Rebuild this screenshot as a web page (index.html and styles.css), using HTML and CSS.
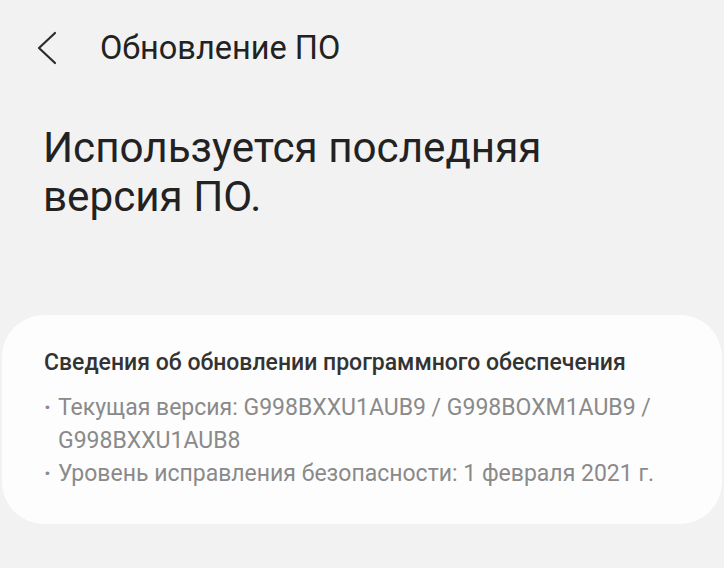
FILE: index.html
```html
<!DOCTYPE html>
<html lang="ru">
<head>
<meta charset="utf-8">
<link rel="stylesheet" href="styles.css">
</head>
<body>
<div class="page">
  <header class="header">
    <span class="back">
      <svg width="20" height="34" viewBox="0 0 20 34"><path d="M18 2 L2 17 L18 32" fill="none" stroke="#2b2b2b" stroke-width="2.2" stroke-linecap="round" stroke-linejoin="round"/></svg>
    </span>
    <h1 class="title">Обновление ПО</h1>
  </header>
  <h2 class="status">Используется последняя<br>версия ПО.</h2>
  <section class="card">
    <h3 class="card-title">Сведения об обновлении программного обеспечения</h3>
    <ul class="info">
      <li>Текущая версия: G998BXXU1AUB9 / G998BOXM1AUB9 / G998BXXU1AUB8</li>
      <li>Уровень исправления безопасности: 1 февраля 2021 г.</li>
    </ul>
  </section>
</div>
</body>
</html>
```
FILE: styles.css
```css
html, body {
  margin: 0;
  padding: 0;
  background: #f2f2f2;
}
.page {
  width: 724px;
  height: 568px;
  overflow: hidden;
  font-family: Roboto, "Noto Sans", sans-serif;
  display: flex;
  flex-direction: column;
}
.header {
  display: flex;
  align-items: center;
  height: 96px;
  padding-left: 37px;
}
.back {
  display: flex;
  width: 63px;
}
.title {
  margin: 0;
  font-size: 32.5px;
  font-weight: 400;
  color: #222;
}
.status {
  margin: 27px 0 0 43px;
  font-size: 42.2px;
  line-height: 49px;
  font-weight: 400;
  color: #222;
}
.card {
  margin: 94px 2px 0 2px;
  background: #fdfdfd;
  border-radius: 42px;
  padding: 34px 30px 30px 42px;
  height: 209px;
  box-sizing: border-box;
}
.card-title {
  margin: 0;
  font-size: 23px;
  font-weight: 500;
  color: #333;
  line-height: 28px;
  white-space: nowrap;
}
.info {
  list-style: none;
  margin: 14px 0 0 0;
  padding: 0;
  font-size: 23px;
  line-height: 33px;
  color: #8a8a8a;
}
.info li {
  position: relative;
  padding-left: 14px;
  width: 620px;
}
.info li::before {
  content: "·";
  position: absolute;
  left: 0;
  font-weight: 700;
}
```
